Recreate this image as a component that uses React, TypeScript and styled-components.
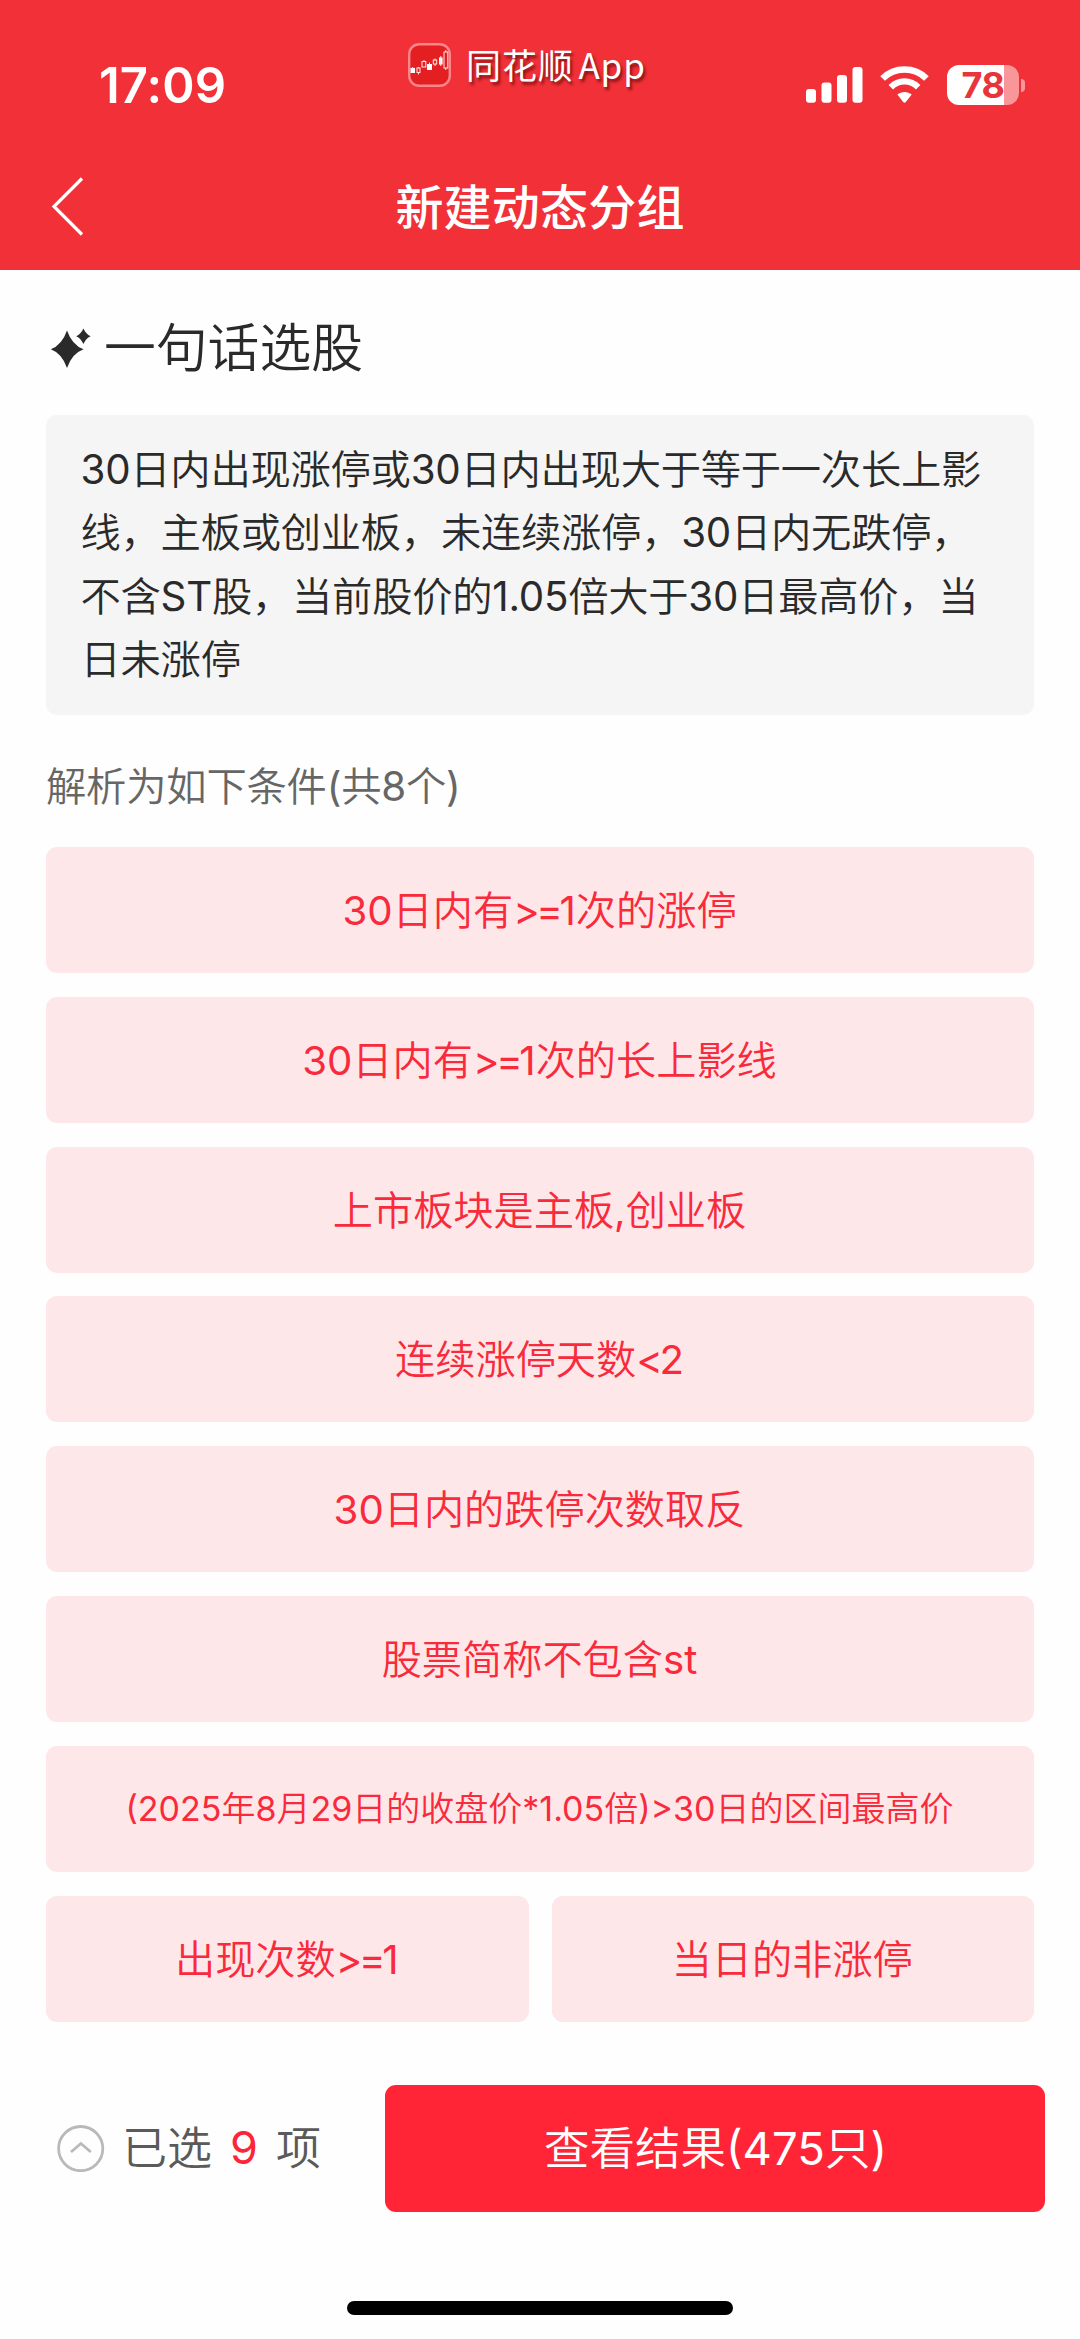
import React from "react";
import styled, { createGlobalStyle } from "styled-components";

const GlobalStyle = createGlobalStyle`
  * { box-sizing: border-box; }
  body { margin: 0; background: #fefefe; }
  button { border: 0; padding: 0; font: inherit; }
  svg { display: block; flex: none; }
`;

const Screen = styled.div`
  width: 1080px;
  height: 2339px;
  display: flex;
  flex-direction: column;
  overflow: hidden;
  background: #fefefe;
  font-family: Inter, "Noto Sans CJK SC DemiLight", "Noto Sans CJK SC", sans-serif;
  font-weight: 400;
  color: #2a2a2a;
  white-space: nowrap;
`;

const Header = styled.header`
  height: 270px;
  background: #f23037;
  color: #fff;
`;

const StatusBar = styled.div`
  height: 140px;
  display: grid;
  grid-template-columns: 408px 1fr 275px;
`;

const Clock = styled.div`
  padding: 55px 0 0 99px;
  font-size: 49px;
  line-height: 61px;
  font-weight: 600;
  letter-spacing: 0.1px;
`;

const AppBadge = styled.div`
  display: flex;
  align-items: center;
  gap: 15px;
  height: 44px;
  margin-top: 43px;
  font-size: 35px;
  line-height: 44px;
  font-weight: 400;
  text-shadow: 2px 3px 3px rgba(70, 0, 0, 0.65);
`;

const AppName = styled.span`
  margin-top: -3px;
  font-family: "Noto Sans CJK SC", sans-serif;
  letter-spacing: 0.9px;
  word-spacing: -4px;
`;

const StatusIcons = styled.div`
  display: flex;
  align-items: center;
  height: 40px;
  margin: 65px 0 0 1px;
`;

const Battery = styled.div`
  display: flex;
  align-items: center;
  justify-content: center;
  width: 72px;
  height: 40px;
  margin-left: 18px;
  border-radius: 12px;
  background: linear-gradient(90deg, #fff 57px, #f8969a 57px);
  color: #e8343b;
  font-size: 36px;
  font-weight: 700;
  letter-spacing: -0.5px;
`;

const BatteryTip = styled.div`
  width: 4px;
  height: 13px;
  margin-left: 2px;
  border-radius: 0 4px 4px 0;
  background: #f8969a;
`;

const NavBar = styled.div`
  height: 130px;
  display: grid;
  grid-template-columns: 140px 1fr 140px;
  align-items: center;
`;

const BackButton = styled.button`
  width: 36px;
  height: 62px;
  margin: 4px 0 0 50px;
  background: none;
`;

const Title = styled.h1`
  margin: 0 0 2px;
  text-align: center;
  font-family: "Noto Sans CJK SC", sans-serif;
  font-size: 48px;
  line-height: 70px;
  font-weight: 500;
  letter-spacing: 0.2px;
`;

const Content = styled.main`
  height: 1815px;
  padding: 42px 46px 0;
`;

const Heading = styled.h2`
  display: flex;
  align-items: center;
  gap: 13px;
  height: 72px;
  margin: 0;
  padding-left: 4px;
  font-size: 51.8px;
  font-weight: 400;
`;

const HeadingText = styled.span`
  margin-top: -7px;
`;

const Query = styled.div`
  height: 300px;
  margin-top: 31px;
  padding: 23px 34.5px;
  border-radius: 11px;
  background: #f5f5f5;
  font-size: 40.3px;
  line-height: 63.4px;
  letter-spacing: -0.25px;
`;

const Caption = styled.div`
  height: 60px;
  margin: 42px 0 30px;
  line-height: 60px;
  font-size: 40.3px;
  letter-spacing: -0.2px;
  color: #666;
`;

const Conditions = styled.div`
  display: grid;
  grid-template-columns: 1fr 1fr;
  gap: 23.8px 23px;
`;

const Condition = styled.button<{ $half?: boolean; $small?: boolean }>`
  grid-column: ${(p) => (p.$half ? "auto" : "span 2")};
  height: 126px;
  padding: 0 1px 5px 0;
  border-radius: 11px;
  background: #fee7e9;
  color: #f92a3b;
  font-size: ${(p) => (p.$small ? 34 : 40.2)}px;
`;

const Operator = styled.span`
  letter-spacing: -3.4px;
`;

const Footer = styled.footer`
  display: flex;
  height: 127px;
  padding: 0 35px 0 57px;
`;

const Selected = styled.div`
  display: flex;
  align-items: center;
  width: 328px;
  padding-bottom: 2px;
  font-size: 45px;
  color: #5a5a5a;
`;

const SelectedText = styled.span`
  margin: -4px 0 0 17px;
`;

const Count = styled.span`
  margin: -1px 1px 0 18px;
  color: #fb2638;
`;

const Submit = styled.button`
  flex: 1;
  padding: 0 0 8px 1px;
  border-radius: 11px;
  background: #ff2436;
  color: #fff;
  font-size: 45.5px;
`;

const HomeIndicator = styled.div`
  width: 386px;
  height: 14px;
  margin: 89px auto 0;
  border-radius: 7px;
  background: #000;
`;

const AppLogo = () => (
  <svg width="43" height="44" viewBox="0 0 43 44">
    <rect x="1.2" y="1.2" width="40.6" height="41.6" rx="10" fill="#e41f22" stroke="#fa858a" strokeWidth="2.4" />
    <g fill="#fff">
      <rect x="2.5" y="25" width="4.5" height="5" />
      <rect x="19" y="21" width="5" height="6" />
      <rect x="31" y="14.5" width="3.6" height="7" />
    </g>
    <g fill="none" stroke="#ffe5e5" strokeWidth="1">
      <path d="M4.7 24v1M21.5 19.5v2M32.8 13v10M10.5 24v1M10.5 29.5v2M16 17v2M27 15.5v2M27 21v2M37.8 7v2M37.8 25v2" />
      <rect x="9" y="25" width="3" height="4.5" />
      <rect x="14" y="18.5" width="3.8" height="5.5" />
      <rect x="25.3" y="17" width="3.4" height="4" />
      <rect x="36" y="9" width="3.8" height="16" />
    </g>
  </svg>
);

const Signal = () => (
  <svg width="57" height="40" viewBox="0 0 57 40" fill="#fff">
    <rect x="0" y="24" width="10" height="13.8" rx="3" />
    <rect x="15.5" y="17.5" width="10" height="20.3" rx="3" />
    <rect x="31" y="10" width="10" height="27.8" rx="3" />
    <rect x="46.5" y="2" width="10" height="35.8" rx="3" />
  </svg>
);

const WifiIcon = styled.svg`
  margin-left: 17px;
`;

const Wifi = () => (
  <WifiIcon width="49" height="40" viewBox="0 0 49 40">
    <path d="M2.6 13.5 C14.5 1.5 34.5 1.5 46.4 13.5" fill="none" stroke="#fff" strokeWidth="6.6" />
    <path d="M10.8 22.2 C18.5 14.5 30.5 14.5 38.2 22.2" fill="none" stroke="#fff" strokeWidth="6.3" />
    <path d="M17.3 29.6 C21.3 26.2 27.7 26.2 31.7 29.6 L25.8 37 Q24.5 38.3 23.2 37 Z" fill="#fff" />
  </WifiIcon>
);

const Sparkles = () => (
  <svg width="41" height="42" viewBox="0 0 41 42" fill="#2a2a2a">
    <path d="M17 3.5 Q22 18 33.5 22.3 Q22 26.5 17 41 Q12 26.5 .8 22.3 Q12 18 17 3.5Z" />
    <path d="M33.4 1.5 Q35.8 7 40.6 9.2 Q35.8 11.4 33.4 17 Q31 11.4 26.2 9.2 Q31 7 33.4 1.5Z" />
  </svg>
);

const CircleUp = () => (
  <svg width="48" height="48" viewBox="0 0 48 48" fill="none" stroke="#b9b9b9">
    <circle cx="23.7" cy="24.6" r="22.1" strokeWidth="2.8" />
    <path d="M14 28 L23.9 19.5 L33.8 28" strokeWidth="2.8" />
  </svg>
);

const lines = [
  "30日内出现涨停或30日内出现大于等于一次长上影",
  "线，主板或创业板，未连续涨停，30日内无跌停，",
  "不含ST股，当前股价的1.05倍大于30日最高价，当",
  "日未涨停",
];

const conditions = [
  { text: "30日内有>=1次的涨停" },
  { text: "30日内有>=1次的长上影线" },
  { text: "上市板块是主板,创业板" },
  { text: "连续涨停天数<2" },
  { text: "30日内的跌停次数取反" },
  { text: "股票简称不包含st" },
  { text: "(2025年8月29日的收盘价*1.05倍)>30日的区间最高价", small: true },
  { text: "出现次数>=1", half: true },
  { text: "当日的非涨停", half: true },
];

const withOperators = (text: string, small?: boolean) =>
  small
    ? text
    : text.split(/(>=|<)/).map((part, i) => (i % 2 ? <Operator key={i}>{part}</Operator> : part));

export default function App() {
  return (
    <Screen>
      <GlobalStyle />
      <Header>
        <StatusBar>
          <Clock>17:09</Clock>
          <AppBadge>
            <AppLogo />
            <AppName>同花顺 App</AppName>
          </AppBadge>
          <StatusIcons>
            <Signal />
            <Wifi />
            <Battery>78</Battery>
            <BatteryTip />
          </StatusIcons>
        </StatusBar>
        <NavBar>
          <BackButton>
            <svg width="36" height="62" viewBox="0 0 36 62" fill="none" stroke="#fff" strokeWidth="3.2">
              <path d="M32 2.5 L4 30.5 L32 58.5" />
            </svg>
          </BackButton>
          <Title>新建动态分组</Title>
        </NavBar>
      </Header>
      <Content>
        <Heading>
          <Sparkles />
          <HeadingText>一句话选股</HeadingText>
        </Heading>
        <Query>
          {lines.map((l) => (
            <div key={l}>{l}</div>
          ))}
        </Query>
        <Caption>解析为如下条件(共8个)</Caption>
        <Conditions>
          {conditions.map((c) => (
            <Condition key={c.text} $half={c.half} $small={c.small}>
              {withOperators(c.text, c.small)}
            </Condition>
          ))}
        </Conditions>
      </Content>
      <Footer>
        <Selected>
          <CircleUp />
          <SelectedText>已选</SelectedText>
          <Count>9</Count>
          <SelectedText>项</SelectedText>
        </Selected>
        <Submit>查看结果(475只)</Submit>
      </Footer>
      <HomeIndicator />
    </Screen>
  );
}
